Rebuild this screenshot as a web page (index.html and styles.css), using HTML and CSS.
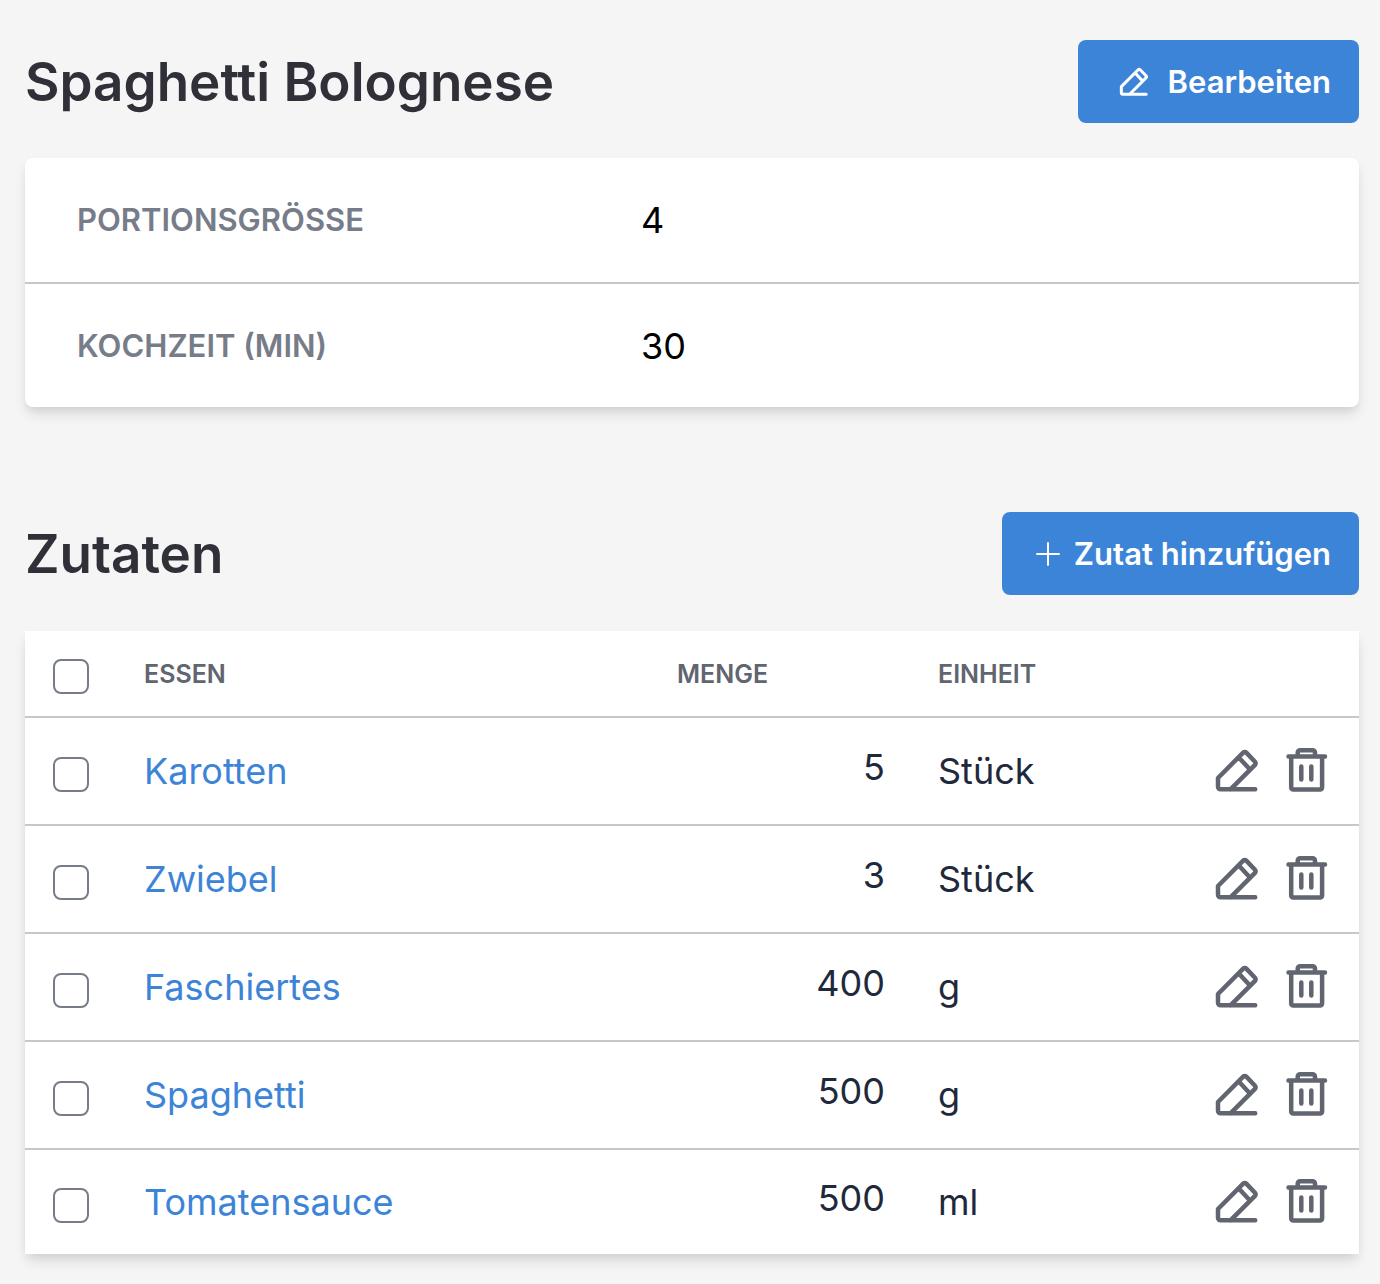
FILE: index.html
```html
<!DOCTYPE html>
<html lang="de">
<head>
    <meta charset="UTF-8">
    <meta name="viewport" content="width=device-width, initial-scale=1.0">
    <title>Spaghetti Bolognese</title>
    <link rel="stylesheet" href="styles.css">
</head>
<body>
<svg class="sprite" aria-hidden="true">
    <symbol id="icon-edit" viewBox="0 0 48 48">
        <path stroke-width="4.5" d="M42.200 42.300H7.500a2.500 2.500 0 0 1-2.500-2.500V31L30.200 5.600a2.200 2.200 0 0 1 3.100 0L42 14.700a2.200 2.200 0 0 1 0 3.100L17.500 42.300M26 10.700L36.500 22"/>
    </symbol>
    <symbol id="icon-trash" viewBox="0 0 48 48">
        <path stroke-width="4.5" d="M5.500 9.500H42M14.700 9V5.700a2.500 2.500 0 0 1 2.500-2.500H29.500a2.500 2.500 0 0 1 2.500 2.500V9M8.200 9.500V40.500a2 2 0 0 0 2 2H37.100a2 2 0 0 0 2-2V9.500M18.300 19.500V32.500M28.300 19.500V32.500"/>
    </symbol>
    <symbol id="icon-plus" viewBox="0 0 24 24">
        <path stroke-width="2" d="M12 1V23M1 12H23"/>
    </symbol>
</svg>
<main class="page">
    <section class="recipe">
        <header class="section-header">
            <h1>Spaghetti Bolognese</h1>
            <button type="button" class="btn btn-edit">
                <svg class="icon-small"><use href="#icon-edit"/></svg>
                Bearbeiten
            </button>
        </header>
        <dl class="details">
            <div class="detail">
                <dt>PORTIONSGRÖSSE</dt>
                <dd>4</dd>
            </div>
            <div class="detail">
                <dt>KOCHZEIT (MIN)</dt>
                <dd>30</dd>
            </div>
        </dl>
    </section>

    <section class="ingredients">
        <header class="section-header">
            <h1>Zutaten</h1>
            <button type="button" class="btn btn-add">
                <svg class="icon-plus"><use href="#icon-plus"/></svg>
                Zutat hinzufügen
            </button>
        </header>
        <table>
            <thead>
            <tr>
                <th class="check"><input type="checkbox" aria-label="Alle auswählen"></th>
                <th class="food">ESSEN</th>
                <th class="amount">MENGE</th>
                <th class="unit">EINHEIT</th>
                <th class="actions"></th>
            </tr>
            </thead>
            <tbody>
            <tr>
                <td class="check"><input type="checkbox" aria-label="Karotten auswählen"></td>
                <td class="food"><a href="#">Karotten</a></td>
                <td class="amount">5</td>
                <td class="unit">Stück</td>
                <td class="actions">
                    <div class="action-list">
                        <button type="button" aria-label="Bearbeiten"><svg><use href="#icon-edit"/></svg></button>
                        <button type="button" aria-label="Löschen"><svg><use href="#icon-trash"/></svg></button>
                    </div>
                </td>
            </tr>
            <tr>
                <td class="check"><input type="checkbox" aria-label="Zwiebel auswählen"></td>
                <td class="food"><a href="#">Zwiebel</a></td>
                <td class="amount">3</td>
                <td class="unit">Stück</td>
                <td class="actions">
                    <div class="action-list">
                        <button type="button" aria-label="Bearbeiten"><svg><use href="#icon-edit"/></svg></button>
                        <button type="button" aria-label="Löschen"><svg><use href="#icon-trash"/></svg></button>
                    </div>
                </td>
            </tr>
            <tr>
                <td class="check"><input type="checkbox" aria-label="Faschiertes auswählen"></td>
                <td class="food"><a href="#">Faschiertes</a></td>
                <td class="amount">400</td>
                <td class="unit">g</td>
                <td class="actions">
                    <div class="action-list">
                        <button type="button" aria-label="Bearbeiten"><svg><use href="#icon-edit"/></svg></button>
                        <button type="button" aria-label="Löschen"><svg><use href="#icon-trash"/></svg></button>
                    </div>
                </td>
            </tr>
            <tr>
                <td class="check"><input type="checkbox" aria-label="Spaghetti auswählen"></td>
                <td class="food"><a href="#">Spaghetti</a></td>
                <td class="amount">500</td>
                <td class="unit">g</td>
                <td class="actions">
                    <div class="action-list">
                        <button type="button" aria-label="Bearbeiten"><svg><use href="#icon-edit"/></svg></button>
                        <button type="button" aria-label="Löschen"><svg><use href="#icon-trash"/></svg></button>
                    </div>
                </td>
            </tr>
            <tr>
                <td class="check"><input type="checkbox" aria-label="Tomatensauce auswählen"></td>
                <td class="food"><a href="#">Tomatensauce</a></td>
                <td class="amount">500</td>
                <td class="unit">ml</td>
                <td class="actions">
                    <div class="action-list">
                        <button type="button" aria-label="Bearbeiten"><svg><use href="#icon-edit"/></svg></button>
                        <button type="button" aria-label="Löschen"><svg><use href="#icon-trash"/></svg></button>
                    </div>
                </td>
            </tr>
            </tbody>
        </table>
    </section>
</main>
</body>
</html>
```
FILE: styles.css
```css
* {
    box-sizing: border-box;
}
body {
    font-family: Inter, "Liberation Sans", sans-serif;
    font-size: 36px;
    line-height: 44px;
    background-color: #f5f5f5;
    color: #000;
    margin: 0;
}
.sprite {
    display: none;
}
svg {
    display: block;
    fill: none;
    stroke: currentColor;
    stroke-linecap: round;
    stroke-linejoin: round;
}
.page {
    padding: 40px 21px 30px 25px;
}
.section-header {
    display: flex;
    justify-content: space-between;
    align-items: center;
    margin-bottom: 35px;
}
h1 {
    margin: 0;
    font-size: 53px;
    font-weight: 600;
    line-height: 64px;
    color: #303138;
}
.btn {
    display: flex;
    align-items: center;
    height: 83px;
    border: none;
    border-radius: 8px;
    background-color: #3c84d8;
    color: #fff;
    font-family: inherit;
    font-size: 31px;
    font-weight: 600;
    cursor: pointer;
}
.btn-edit {
    padding: 0 28px 0 40px;
    gap: 18px;
}
.btn-add {
    padding: 0 28px 0 34px;
    gap: 14px;
}
.icon-small {
    width: 32px;
    height: 32px;
}
.icon-plus {
    width: 24px;
    height: 24px;
}
.details, table {
    background: #fff;
    box-shadow: 0 9px 13px -2px rgba(0, 0, 0, 0.1), 0 4px 9px -2px rgba(0, 0, 0, 0.08);
}
.details {
    margin: 0;
    border-radius: 8px;
}
.detail {
    display: grid;
    grid-template-columns: 564px 1fr;
    align-items: center;
    height: 124px;
    padding: 0 52px;
}
.detail + .detail {
    height: 125px;
    border-top: 2px solid #c7c8cd;
}
dt {
    font-size: 31px;
    font-weight: 600;
    color: #777c89;
}
dd {
    margin: 0;
}
.ingredients {
    margin-top: 105px;
}
.ingredients .section-header {
    margin-bottom: 36px;
}
table {
    width: 100%;
    table-layout: fixed;
    border-collapse: separate;
    border-spacing: 0;
    color: #1e293b;
}
th, td {
    padding: 0;
    text-align: left;
    vertical-align: middle;
    border-bottom: 2px solid #c7c8cd;
}
th {
    height: 87px;
    font-size: 25px;
    font-weight: 600;
    color: #60656f;
}
td {
    height: 108px;
}
tbody tr:last-child td {
    height: 104px;
    border-bottom: none;
}
.check {
    width: 119px;
    padding: 6px 0 0 28px;
}
.amount {
    width: 261px;
}
td.amount {
    padding: 0 53px 8px 0;
    text-align: right;
}
.unit {
    width: 248px;
}
.actions {
    width: 173px;
}
input[type="checkbox"] {
    display: block;
    appearance: none;
    width: 36px;
    height: 35px;
    margin: 0;
    border: 2px solid #777c89;
    border-radius: 8px;
    background: #fff;
}
input[type="checkbox"]:checked {
    background: #3c84d8;
}
a {
    color: #3c84d8;
    text-decoration: none;
}
a:hover {
    text-decoration: underline;
}
.action-list {
    display: flex;
    justify-content: flex-end;
    gap: 22px;
    padding-right: 28px;
}
.action-list button {
    padding: 0;
    border: none;
    background: none;
    color: #60656f;
    cursor: pointer;
}
.action-list svg {
    width: 48px;
    height: 48px;
}
```
